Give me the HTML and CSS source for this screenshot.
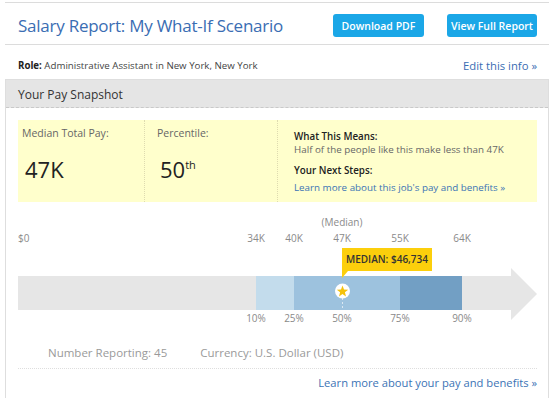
FILE: index.html
```html
<!DOCTYPE html>
<html lang="en">
<head>
    <meta charset="UTF-8">
    <meta name="viewport" content="width=device-width, initial-scale=1.0">
    <title>Salary Report</title>
    <link rel="stylesheet" href="styles.css">
</head>
<body>

<div class="page">
    <div class="topbar">
        <h1 class="title">Salary Report: My What-If Scenario</h1>
        <div class="actions">
            <a class="btn btn-pdf" href="#">Download PDF</a>
            <a class="btn btn-full" href="#">View Full Report</a>
        </div>
    </div>

    <div class="role-row">
        <span class="role"><b>Role:</b> Administrative Assistant in New York, New York</span>
        <a class="edit-link" href="#">Edit this info &raquo;</a>
    </div>

    <div class="panel">
        <div class="panel-head">Your Pay Snapshot</div>
        <div class="panel-body">
            <div class="summary">
                <div class="cell cell-pay">
                    <div class="cell-label">Median Total Pay:</div>
                    <div class="big">47K</div>
                </div>
                <div class="cell cell-pct">
                    <div class="cell-label">Percentile:</div>
                    <div class="big">50<sup>th</sup></div>
                </div>
                <div class="cell cell-info">
                    <div class="info-title">What This Means:</div>
                    <div class="info-text">Half of the people like this make less than 47K</div>
                    <div class="info-title info-next">Your Next Steps:</div>
                    <a class="info-link" href="#">Learn more about this job's pay and benefits &raquo;</a>
                </div>
            </div>

            <!-- chart: x positions are the pay values scaled to 519px -->
            <div class="chart">
                <svg class="bar" width="519" height="130" viewBox="0 0 519 130">
                    <polygon points="0,74 493,74 493,66 519,92 493,118 493,108 0,108" fill="#e6e6e6"/>
                    <rect x="238" y="74" width="38" height="34" fill="#c3dcec"/>
                    <rect x="276" y="74" width="106" height="34" fill="#9dc2de"/>
                    <rect x="382" y="74" width="62" height="34" fill="#729fc4"/>
                    <line x1="324.5" y1="96" x2="324.5" y2="108" stroke="#dbe8f2" stroke-width="1" stroke-dasharray="2,2"/>
                    <circle cx="324.5" cy="89" r="7.5" fill="#ffffff"/>
                    <polygon points="324.5,83.5 326,87.6 330.2,87.7 326.9,90.3 328,94.4 324.5,92 321,94.4 322.1,90.3 318.8,87.7 323,87.6" fill="#f4c20d"/>
                </svg>

                <span class="median-note" style="left: 324px">(Median)</span>
                <span class="tick zero">$0</span>
                <span class="tick" style="left: 238px">34K</span>
                <span class="tick" style="left: 276px">40K</span>
                <span class="tick" style="left: 324px">47K</span>
                <span class="tick" style="left: 382px">55K</span>
                <span class="tick" style="left: 444px">64K</span>

                <span class="pct" style="left: 238px">10%</span>
                <span class="pct" style="left: 276px">25%</span>
                <span class="pct" style="left: 324px">50%</span>
                <span class="pct" style="left: 382px">75%</span>
                <span class="pct" style="left: 444px">90%</span>

                <div class="tip" style="left: 324px">MEDIAN: $46,734</div>
            </div>

            <div class="meta">
                <span>Number Reporting: 45</span>
                <span class="currency">Currency: U.S. Dollar (USD)</span>
            </div>
            <div class="more">
                <a href="#">Learn more about your pay and benefits &raquo;</a>
            </div>
        </div>
    </div>
</div>

</body>
</html>
```

FILE: styles.css
```css
body {
    font-family: 'Open Sans', 'DejaVu Sans', sans-serif;
    background-color: #ffffff;
    margin: 0;
    padding: 0;
    color: #333;
}
a {
    text-decoration: none;
}
.page {
    margin: 2px 5px 0;
    border-top: 1px solid #dcdcdc;
}
.topbar {
    display: flex;
    align-items: center;
    justify-content: space-between;
    padding: 11px 12px 7px 13px;
    border-bottom: 1px solid #dcdcdc;
}
.title {
    margin: 0;
    font-size: 17px;
    font-weight: 400;
    color: #3a6db3;
    letter-spacing: -0.25px;
}
.actions {
    display: flex;
    gap: 23px;
}
.btn {
    display: flex;
    align-items: center;
    justify-content: center;
    height: 23px;
    border-radius: 3px;
    background-color: #1ba7e7;
    color: white;
    font-size: 10.5px;
    font-weight: 600;
}
.btn-pdf {
    width: 91px;
}
.btn-full {
    width: 90px;
}
.role-row {
    display: flex;
    justify-content: space-between;
    align-items: center;
    padding: 14px 12px 6px 13px;
    line-height: 14px;
}
.role {
    font-size: 9.7px;
    color: #444;
}
.role b {
    font-weight: 700;
    color: #222;
}
.edit-link {
    font-size: 11.3px;
    color: #3a6db3;
}
.panel {
    border: 1px solid #dedede;
    border-bottom: none;
}
.panel-head {
    height: 27px;
    line-height: 30px;
    padding-left: 12px;
    background-color: #e5e5e5;
    border-bottom: 1px dashed #c9c9c9;
    font-size: 12px;
    color: #333;
}
.panel-body {
    padding: 12px 11px 8px 12px;
}
.summary {
    display: flex;
    height: 82px;
    background-color: #ffffcc;
}
.cell {
    box-sizing: border-box;
}
.cell-pay {
    width: 126px;
    padding: 6px 0 0 4px;
}
.cell-pct {
    width: 133px;
    padding: 6px 0 0 12px;
    border-left: 1px dotted #dedbb0;
}
.cell-info {
    flex: 1;
    padding: 10px 0 0 16px;
    border-left: 1px dotted #dedbb0;
}
.cell-label {
    font-size: 10.5px;
    color: #666;
    line-height: 14px;
}
.big {
    margin-top: 17px;
    font-size: 22px;
    line-height: 24px;
    color: #222;
}
.cell-pay .big {
    padding-left: 3px;
}
.cell-pct .big {
    padding-left: 3px;
}
.big sup {
    font-size: 11px;
    vertical-align: 9px;
    line-height: 0;
}
.info-title {
    font-size: 9.8px;
    font-weight: 600;
    color: #222;
    line-height: 13px;
}
.info-next {
    margin-top: 8px;
}
.info-text {
    font-size: 9.8px;
    color: #666;
    line-height: 13px;
}
.info-link {
    display: block;
    margin-top: 4px;
    font-size: 9.8px;
    line-height: 13px;
    color: #3b73b5;
}
.chart {
    position: relative;
    height: 130px;
}
.bar {
    display: block;
}
.tick,
.pct,
.median-note {
    position: absolute;
    font-size: 10px;
    line-height: 14px;
    color: #8a8a8a;
    transform: translateX(-50%);
    white-space: nowrap;
}
.tick {
    top: 29px;
}
.tick.zero {
    left: 0;
    transform: none;
}
.median-note {
    top: 13px;
}
.pct {
    top: 109px;
}
.tip {
    position: absolute;
    top: 46px;
    height: 23px;
    line-height: 23px;
    padding: 0 4px;
    background-color: #fccf0c;
    font-size: 10px;
    font-weight: 600;
    color: #333;
    white-space: nowrap;
}
.tip::after {
    content: "";
    position: absolute;
    left: 0;
    bottom: -7px;
    border-top: 7px solid #fccf0c;
    border-right: 6px solid transparent;
}
.meta {
    display: flex;
    gap: 33px;
    padding: 14px 0 8px 30px;
    font-size: 11.5px;
    line-height: 14px;
    color: #9a9a9a;
    border-bottom: 1px dotted #dedede;
}
.more {
    display: flex;
    justify-content: flex-end;
    padding-top: 7px;
    font-size: 11.2px;
    line-height: 14px;
}
.more a {
    color: #3b73b5;
}
```
